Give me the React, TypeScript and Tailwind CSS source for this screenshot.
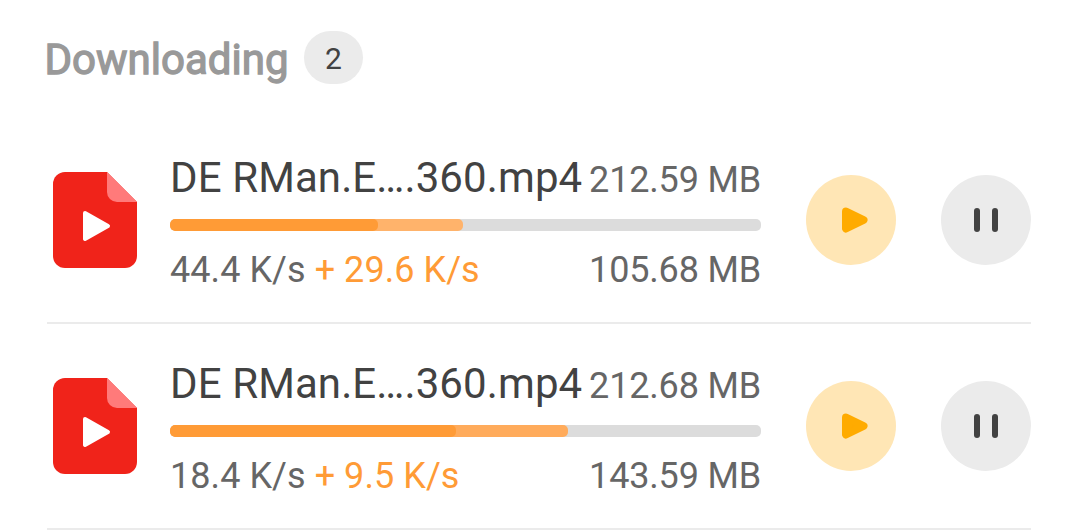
import React from 'react';

type Download = {
  id: number;
  name: string;
  total: string;
  done: string;
  speed: string;
  boost: string;
  base: number;
  boosted: number;
  boostColor: string;
};

// base and boosted are bar widths in percent
const downloads: Download[] = [
  {
    id: 1,
    name: 'DE RMan.E….360.mp4',
    total: '212.59 MB',
    done: '105.68 MB',
    speed: '44.4 K/s',
    boost: '+ 29.6 K/s',
    base: 35.2,
    boosted: 49.6,
    boostColor: 'bg-[#ffb36b]',
  },
  {
    id: 2,
    name: 'DE RMan.E….360.mp4',
    total: '212.68 MB',
    done: '143.59 MB',
    speed: '18.4 K/s',
    boost: '+ 9.5 K/s',
    base: 48.4,
    boosted: 67.35,
    boostColor: 'bg-[#ffab5b]',
  },
];

function VideoFileIcon() {
  return (
    <svg width="84" height="96" viewBox="0 0 84 96" className="shrink-0">
      <path
        d="M12 0H54L84 30V84a12 12 0 0 1-12 12H12A12 12 0 0 1 0 84V12A12 12 0 0 1 12 0Z"
        fill="#f0231a"
      />
      <path d="M54 0L84 30H64a10 10 0 0 1-10-10Z" fill="#ff7a7a" />
      <path
        d="M32 41L55 54L32 67Z"
        fill="#fff"
        stroke="#fff"
        strokeWidth="4"
        strokeLinejoin="round"
      />
    </svg>
  );
}

function PlayIcon() {
  return (
    <svg width="90" height="90" viewBox="0 0 90 90">
      <path
        d="M40 36.5L57.5 45L40 53.5Z"
        fill="#ffab00"
        stroke="#ffab00"
        strokeWidth="8"
        strokeLinejoin="round"
      />
    </svg>
  );
}

function ProgressBar({ base, boosted, boostColor }: Pick<Download, 'base' | 'boosted' | 'boostColor'>) {
  return (
    <div className="mt-4 h-3 rounded-[5px] bg-[#dcdcdc] overflow-hidden">
      <div className={`h-full rounded-[5px] ${boostColor}`} style={{ width: `${boosted}%` }}>
        <div
          className="h-full rounded-[5px] bg-[#ff9b36]"
          style={{ width: `${(base / boosted) * 100}%` }}
        />
      </div>
    </div>
  );
}

function DownloadRow({ item }: { item: Download }) {
  return (
    <li className="flex h-[206px] items-start border-b-2 border-[#ebebeb] pl-1.5">
      <div className="mt-[54px] flex">
        <VideoFileIcon />
      </div>

      <div className="ml-[33px] mt-[35px] w-[591px] whitespace-nowrap">
        <div className="flex items-baseline justify-between">
          <span className="text-[42px] leading-[50px] tracking-[0.1px] text-[#424242]">{item.name}</span>
          <span className="text-[36px] leading-[42px] tracking-[-0.17px] text-[#666]">{item.total}</span>
        </div>
        <ProgressBar base={item.base} boosted={item.boosted} boostColor={item.boostColor} />
        <div className="mt-[18px] flex justify-between text-[36px] leading-[42px] text-[#666]">
          <span className="tracking-[0.06px]">
            {item.speed} <span className="text-[#ff9b36]">{item.boost}</span>
          </span>
          <span className="tracking-[-0.17px]">{item.done}</span>
        </div>
      </div>

      <button className="ml-[45px] mt-[57px] h-[90px] w-[90px] rounded-full bg-[#ffe6b5]">
        <PlayIcon />
      </button>
      <button className="ml-[45px] mt-[57px] flex h-[90px] w-[90px] items-center justify-center gap-3 rounded-full bg-[#ebebeb]">
        <span className="h-6 w-1.5 rounded-full bg-[#424242]" />
        <span className="h-6 w-1.5 rounded-full bg-[#424242]" />
      </button>
    </li>
  );
}

export default function App() {
  return (
    <div className="h-[531px] w-[1079px] overflow-hidden bg-white font-['Roboto',sans-serif]">
      <header className="flex h-[118px] items-start pl-[44.5px]">
        <h1 className="mt-[35px] w-[259.5px] text-[42px] leading-[50px] text-[#999] [-webkit-text-stroke:1.3px_#999]">
          Downloading
        </h1>
        <span className="mt-[31px] flex h-[53px] w-[59px] items-center justify-center rounded-full bg-[#ebebeb] pt-0.5 text-[30px] text-[#424242]">
          {downloads.length}
        </span>
      </header>

      <ul className="ml-[47px] w-[984px]">
        {downloads.map((item) => (
          <DownloadRow key={item.id} item={item} />
        ))}
      </ul>
    </div>
  );
}
